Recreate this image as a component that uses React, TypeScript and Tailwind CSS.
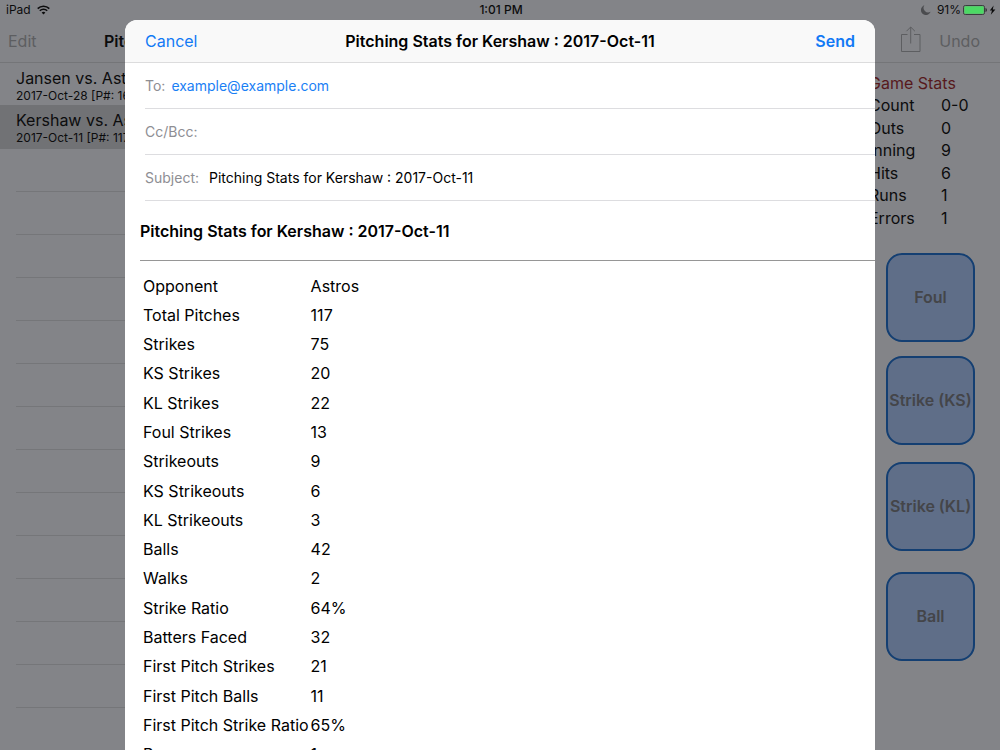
import React from "react";

interface Game {
  title: string;
  detail: string;
  selected?: boolean;
}

interface StatProps {
  label: string;
  value: string;
}

const games: Game[] = [
  { title: "Jansen vs. Astros", detail: "2017-Oct-28 [P#: 16]" },
  { title: "Kershaw vs. Astros", detail: "2017-Oct-11 [P#: 117]", selected: true },
];

const gameStats: StatProps[] = [
  { label: "Count", value: "0-0" },
  { label: "Outs", value: "0" },
  { label: "Inning", value: "9" },
  { label: "Hits", value: "6" },
  { label: "Runs", value: "1" },
  { label: "Errors", value: "1" },
];

const pitchingStats: StatProps[] = [
  { label: "Opponent", value: "Astros" },
  { label: "Total Pitches", value: "117" },
  { label: "Strikes", value: "75" },
  { label: "KS Strikes", value: "20" },
  { label: "KL Strikes", value: "22" },
  { label: "Foul Strikes", value: "13" },
  { label: "Strikeouts", value: "9" },
  { label: "KS Strikeouts", value: "6" },
  { label: "KL Strikeouts", value: "3" },
  { label: "Balls", value: "42" },
  { label: "Walks", value: "2" },
  { label: "Strike Ratio", value: "64%" },
  { label: "Batters Faced", value: "32" },
  { label: "First Pitch Strikes", value: "21" },
  { label: "First Pitch Balls", value: "11" },
  { label: "First Pitch Strike Ratio", value: "65%" },
  { label: "Runs", value: "1" },
];

const WifiIcon = () => (
  <svg width="13" height="10" viewBox="0 0 13 10" fill="none" stroke="#0c0c0d" strokeWidth="1.6">
    <path d="M.7 3.6a8.2 8.2 0 0 1 11.6 0" />
    <path d="M2.8 5.8a5.2 5.2 0 0 1 7.4 0" />
    <path d="M6.5 9.6 4.6 7.6a2.7 2.7 0 0 1 3.8 0z" fill="#0c0c0d" stroke="none" />
  </svg>
);

const MoonIcon = () => (
  <svg width="10" height="10" viewBox="0 0 10 10" fill="#4b4c4f">
    <path d="M3.4.3A5 5 0 1 0 9.6 6.8 4.6 4.6 0 0 1 3.4.3z" />
  </svg>
);

const BatteryIcon = () => (
  <svg width="33" height="10" viewBox="0 0 33 10">
    <rect x=".5" y=".5" width="21" height="9" rx="1.8" fill="none" stroke="#3b3c3e" />
    <rect x="1.3" y="1.3" width="19.4" height="7.4" rx=".8" fill="#4cd964" />
    <path d="M22.6 3c1.400.4 1.400 3.600 0 4z" fill="#0c0c0d" />
    <path d="M30.6.4 26.800 5.600h2.200L27.800 9.800 32.400 4.400h-2.600z" fill="#0c0c0d" />
  </svg>
);

const ShareIcon = () => (
  <svg width="20" height="27" viewBox="0 0 20 27" fill="none" stroke="#5d5e61">
    <path d="M6.5 8.5h-6v17h18.500v-17h-6" />
    <path d="M9.700 17.500V1M5.500 5.200 9.700 1l4.200 4.200" />
  </svg>
);

const StatusBar = () => (
  <div className="grid h-5 grid-cols-3 items-center pr-1 pl-1.5 text-xs text-[#0c0c0d]">
    <div className="flex items-center gap-1.5">
      <span>iPad</span>
      <WifiIcon />
    </div>
    <span className="text-center font-medium">1:01 PM</span>
    <div className="flex items-center justify-end gap-0.5">
      <MoonIcon />
      <span className="ml-1">91%</span>
      <BatteryIcon />
    </div>
  </div>
);

const Sidebar = () => (
  <aside className="flex w-[313px] shrink-0 flex-col">
    <div className="flex h-[43px] shrink-0 items-center border-b border-[#747578] px-2">
      <button type="button" className="w-24 text-left text-[#5d5e61]">
        Edit
      </button>
      <h2 className="font-semibold">Pitching Log</h2>
    </div>
    <ul>
      {games.map((game) => (
        <li
          key={game.title}
          className={
            game.selected
              ? "flex h-11 flex-col bg-[#717275] pt-[5px] pl-4"
              : "flex h-[42px] flex-col pt-[5px] pl-4"
          }
        >
          <span className="leading-5">{game.title}</span>
          <span className="text-xs leading-4">{game.detail}</span>
        </li>
      ))}
      {Array.from({ length: 14 }, (_, i) => (
        <li key={i} className="ml-4 h-[43px] border-b border-[#757679]" />
      ))}
    </ul>
  </aside>
);

const PitchButton = ({ label, className }: { label: string; className: string }) => (
  <button
    type="button"
    className={`size-[89px] rounded-2xl border-2 border-[#143f72] bg-[#5f6e88] font-semibold whitespace-nowrap text-[#444549] ${className}`}
  >
    <span className="-mx-2">{label}</span>
  </button>
);

const GamePanel = () => (
  <main className="flex min-w-0 grow flex-col">
    <div className="flex h-[43px] shrink-0 items-center justify-end gap-[18px] border-b border-[#747578] pr-5 text-[#5d5e61]">
      <button type="button" aria-label="Share" className="pb-0.5">
        <ShareIcon />
      </button>
      <button type="button">Undo</button>
    </div>
    <div className="flex w-[131px] flex-col self-end pt-2 leading-[22px]">
      <h3 className="pt-px text-[#57191c]">Game Stats</h3>
      <dl className="grid h-[135px] grid-cols-[72px_1fr] items-center">
        {gameStats.map((stat) => (
          <React.Fragment key={stat.label}>
            <dt>{stat.label}</dt>
            <dd>{stat.value}</dd>
          </React.Fragment>
        ))}
      </dl>
      <div className="flex flex-col pt-6 pl-[17px]">
        <PitchButton label="Foul" className="mb-[14px]" />
        <PitchButton label="Strike (KS)" className="mb-[17px]" />
        <PitchButton label="Strike (KL)" className="mb-[21px]" />
        <PitchButton label="Ball" className="mb-0" />
      </div>
    </div>
  </main>
);

const MailField = ({ id, label, value, link }: { id: string; label: string; value: string; link?: boolean }) => (
  <div className="ml-5 flex h-[46px] items-center border-b border-[#dddde0] text-sm">
    <label htmlFor={id} className={link ? "pr-1.5 text-[#8e8e93]" : "pr-2.5 text-[#8e8e93]"}>
      {label}
    </label>
    <input
      id={id}
      defaultValue={value}
      className={link ? "min-w-0 grow text-[#1a80f5] outline-none" : "min-w-0 grow outline-none"}
    />
  </div>
);

const MailSheet = () => (
  <div
    role="dialog"
    aria-label="New message"
    className="absolute inset-x-[12.5%] top-5 bottom-0 overflow-hidden rounded-t-xl bg-white text-black"
  >
    <header className="grid h-[43px] grid-cols-[1fr_auto_1fr] items-center border-b border-[#dcdcdd] bg-[#f9f9f9] px-5">
      <button type="button" className="justify-self-start text-[#1279f5]">
        Cancel
      </button>
      <h1 className="font-semibold">Pitching Stats for Kershaw : 2017-Oct-11</h1>
      <button type="button" className="justify-self-end font-semibold text-[#1279f5]">
        Send
      </button>
    </header>
    <MailField id="to" label="To:" value="example@example.com" link />
    <MailField id="cc" label="Cc/Bcc:" value="" />
    <MailField id="subject" label="Subject:" value="Pitching Stats for Kershaw : 2017-Oct-11" />
    <div className="pt-[18px] pl-[15px]">
      <h2 className="pb-[17px] font-semibold">Pitching Stats for Kershaw : 2017-Oct-11</h2>
      <hr className="border-[#969696]" />
      <table className="mt-2.5 h-[498px]">
        <tbody>
          {pitchingStats.map((stat) => (
            <tr key={stat.label}>
              <th scope="row" className="py-0 pr-0.5 pl-[3px] text-left font-normal whitespace-nowrap">
                {stat.label}
              </th>
              <td>{stat.value}</td>
            </tr>
          ))}
        </tbody>
      </table>
    </div>
  </div>
);

export default function App() {
  return (
    <div className="relative flex h-screen flex-col overflow-hidden bg-[#838488] font-['Inter',sans-serif] text-base text-[#0c0c0d]">
      <StatusBar />
      <div className="flex min-h-0 grow">
        <Sidebar />
        <GamePanel />
      </div>
      <MailSheet />
    </div>
  );
}
